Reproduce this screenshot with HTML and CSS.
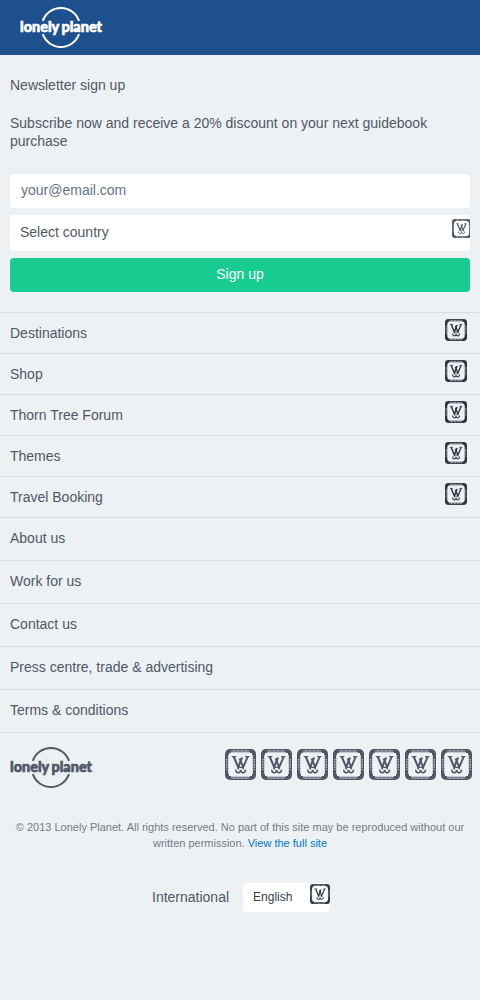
FILE: index.html
```
<!DOCTYPE html>
<html lang="en">
<head>
<meta charset="utf-8">
<title>Lonely Planet</title>
<link rel="stylesheet" href="styles.css">
</head>
<body>
<svg class="defs" width="0" height="0" aria-hidden="true">
  <symbol id="mark" viewBox="0 0 31 31">
    <rect x="1.6" y="1.6" width="27.8" height="27.8" rx="3.2" fill="none" stroke="currentColor" stroke-width="3.2"/>
    <path d="M3.2 6V3.2H6M25 3.2H27.8V6M27.8 25V27.8H25M6 27.8H3.2V25" fill="none" stroke="currentColor" stroke-width="1.6"/>
    <path d="M6.5 1.8H24.5M6.5 29.2H24.5" fill="none" stroke="#edf1f4" stroke-width="1.8" stroke-dasharray="1 .9 1.4 .7" opacity=".65"/>
    <path d="M1.8 10V21M29.2 10V21" fill="none" stroke="#edf1f4" stroke-width="1.6" stroke-dasharray="1.5 1" opacity=".55"/>
    <path d="M6.8 7.6H11.2M20.2 7.6H24.4" fill="none" stroke="currentColor" stroke-width="1.1"/>
    <path d="M8.8 7.8L13.2 18.2L17 8.5" fill="none" stroke="currentColor" stroke-width="2.1"/>
    <path d="M14.6 9.5L18.2 18.2L22.6 7.8" fill="none" stroke="currentColor" stroke-width="1.9"/>
    <path d="M10.8 20.6C10.4 24.6 15.6 24.8 15.6 20.8C15.6 24.8 20.8 24.6 20.4 20.6" fill="none" stroke="currentColor" stroke-width="1.6"/>
    <path d="M12.6 20L14.2 18.4H17.2L18.8 20" fill="none" stroke="currentColor" stroke-width="1.1"/>
  </symbol>
  <symbol id="logo" viewBox="0 0 84 42" overflow="visible">
    <path d="M22.8 14.8A19.2 19.2 0 0 1 59 14.8M22.8 28.2A19.2 19.2 0 0 0 59 28.2" fill="none" stroke="currentColor" stroke-width="2"/>
    <text class="logo-text" x="0" y="26" textLength="82" lengthAdjust="spacingAndGlyphs">lonely planet</text>
  </symbol>
</svg>
<header class="header"><svg class="logo"><use href="#logo"/></svg></header>
<main>
  <form class="newsletter">
    <h2 class="title">Newsletter sign up</h2>
    <p class="intro">Subscribe now and receive a 20% discount on your next guidebook purchase</p>
    <div class="field email">your@email.com</div>
    <div class="field country"><span>Select country</span><svg class="select-mark"><use href="#mark"/></svg></div>
    <div class="submit">Sign up</div>
  </form>
  <nav>
    <a class="row"><span>Destinations</span><svg class="row-mark"><use href="#mark"/></svg></a>
    <a class="row"><span>Shop</span><svg class="row-mark"><use href="#mark"/></svg></a>
    <a class="row"><span>Thorn Tree Forum</span><svg class="row-mark"><use href="#mark"/></svg></a>
    <a class="row"><span>Themes</span><svg class="row-mark"><use href="#mark"/></svg></a>
    <a class="row"><span>Travel Booking</span><svg class="row-mark"><use href="#mark"/></svg></a>
    <a class="row plain">About us</a>
    <a class="row plain">Work for us</a>
    <a class="row plain">Contact us</a>
    <a class="row plain">Press centre, trade &amp; advertising</a>
    <a class="row plain">Terms &amp; conditions</a>
  </nav>
</main>
<footer class="footer">
  <div class="brand">
    <svg class="logo"><use href="#logo"/></svg>
    <div class="social">
      <svg><use href="#mark"/></svg><svg><use href="#mark"/></svg><svg><use href="#mark"/></svg><svg><use href="#mark"/></svg><svg><use href="#mark"/></svg><svg><use href="#mark"/></svg><svg><use href="#mark"/></svg>
    </div>
  </div>
  <p class="legal">© 2013 Lonely Planet. All rights reserved. No part of this site may be reproduced without our<br>written permission. <a class="link">View the full site</a></p>
  <div class="locale">
    <span>International</span>
    <div class="language"><span>English</span><svg class="language-mark"><use href="#mark"/></svg></div>
  </div>
</footer>
</body>
</html>
```
FILE: styles.css
```
* { box-sizing: border-box; }
body {
  margin: 0;
  min-height: 1000px;
  background: #edf1f4;
  color: #4f5865;
  font: 14px/18px "Liberation Sans", Arial, sans-serif;
}
svg { display: block; flex: none; overflow: visible; }
.defs { position: absolute; }
.header { height: 55px; padding: 6px 20px; background: #1d508d; color: #fff; }
.logo { width: 84px; height: 42px; }
.logo-text {
  font: 900 15.5px Lato, "Liberation Sans", sans-serif;
  word-spacing: -1px;
  fill: currentColor;
  stroke: currentColor;
  stroke-width: .7px;
}
.newsletter { height: 257px; padding: 21px 10px 0; }
.title { margin: 0 0 20px; font-size: 14px; font-weight: 400; line-height: 18px; }
.intro { margin: 0 0 24px; }
.field { display: flex; border-radius: 4px; background: #fff; }
.email { height: 34px; padding: 7px 11px; margin-bottom: 7px; color: #66737f; }
.country { height: 36px; padding: 8px 0 0 10px; margin-bottom: 7px; justify-content: space-between; overflow: hidden; }
.select-mark { width: 19px; height: 19px; margin-top: -4px; margin-right: -1px; }
.submit { height: 34px; padding-top: 7px; border-radius: 4px; background: #18cb90; color: #fff; text-align: center; }
.row {
  display: flex;
  justify-content: space-between;
  height: 41px;
  padding: 11px 13px 0 10px;
  border-top: 1px solid #d7dee3;
}
.plain { height: 43px; }
.row-mark { width: 22px; height: 22px; margin-top: -5px; color: #2c3643; }
.footer { border-top: 1px solid #d7dee3; }
.brand { display: flex; justify-content: space-between; padding: 13px 8px 0 10px; }
.social { display: flex; gap: 5px; padding-top: 3px; }
.social svg { width: 31px; height: 31px; }
.legal { margin: 31px 0 0; color: #727d83; font-size: 11px; line-height: 16px; text-align: center; }
.link { color: #0079cc; }
.locale { display: flex; padding: 32px 0 0 152px; gap: 14px; }
.locale > span { padding-top: 5px; }
.language {
  display: flex;
  width: 87px;
  height: 29px;
  padding: 5px 0 0 10px;
  gap: 18px;
  border-radius: 4px;
  background: #fff;
  color: #343d49;
  font-size: 12px;
}
.language-mark { width: 20px; height: 20px; margin-top: -4px; }
```
